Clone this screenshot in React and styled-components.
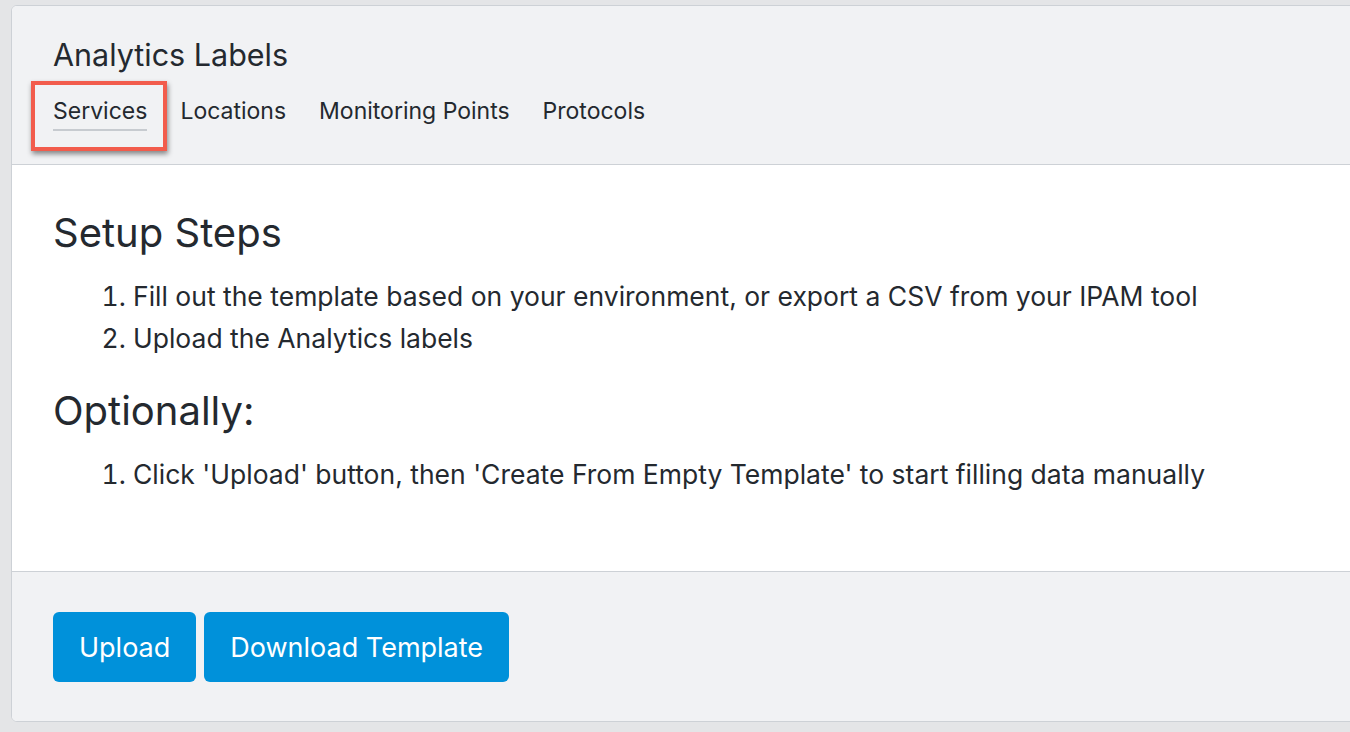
import React from "react";
import styled, { createGlobalStyle } from "styled-components";

const Global = createGlobalStyle`
  body {
    margin: 0;
    background: #e4e5e7;
    font-family: Inter, "Noto Sans", sans-serif;
    color: #24292f;
  }
`;

const Page = styled.div`
  padding: 5px 0 10px 11px;
  overflow: hidden;
`;

const Card = styled.div`
  width: 1360px;
  border: 1.5px solid #cdd1d6;
  border-radius: 6px;
  overflow: hidden;
  background: #fff;
`;

const Header = styled.div`
  background: #f1f2f4;
  border-bottom: 1.5px solid #cdd1d6;
  padding: 31px 41px 0;
  height: 159px;
  box-sizing: border-box;
`;

const Title = styled.div`
  font-size: 30.5px;
  line-height: 36px;
`;

const Tabs = styled.div`
  display: flex;
  gap: 33px;
  margin-top: 24px;
`;

const Tab = styled.div`
  position: relative;
  font-size: 23px;
  line-height: 28px;
  padding-bottom: 4px;
  border-bottom: 2px solid ${(p) => (p.$active ? "#c7cbd0" : "transparent")};
`;

const Highlight = styled.div`
  position: absolute;
  left: -22px;
  top: -16px;
  width: 128px;
  height: 62px;
  border: 4px solid #f25c4c;
  box-shadow: 1px 3px 5px rgba(0, 0, 0, 0.45);
`;

const Body = styled.div`
  padding: 44px 41px 60px;
  height: 406px;
  box-sizing: border-box;
`;

const Heading = styled.h2`
  font-size: 40px;
  font-weight: 400;
  margin: 0;
  line-height: 48px;
`;

const List = styled.ol`
  margin: 18px 0 28px;
  padding-left: 80px;
  font-size: 26.5px;
  line-height: 42px;
`;

const Footer = styled.div`
  background: #f1f2f4;
  border-top: 1.5px solid #cdd1d6;
  padding: 40px 41px 39px;
  display: flex;
  gap: 8px;
`;

const Button = styled.button`
  background: #0091da;
  color: #fff;
  border: none;
  border-radius: 6px;
  height: 70px;
  padding: 0 26px;
  font-family: inherit;
  font-size: 27px;
`;

export default function App() {
  return (
    <>
      <Global />
      <Page>
        <Card>
          <Header>
            <Title>Analytics Labels</Title>
            <Tabs>
              <Tab $active>
                Services
                <Highlight />
              </Tab>
              <Tab>Locations</Tab>
              <Tab>Monitoring Points</Tab>
              <Tab>Protocols</Tab>
            </Tabs>
          </Header>
          <Body>
            <Heading>Setup Steps</Heading>
            <List>
              <li>Fill out the template based on your environment, or export a CSV from your IPAM tool</li>
              <li>Upload the Analytics labels</li>
            </List>
            <Heading>Optionally:</Heading>
            <List>
              <li>Click 'Upload' button, then 'Create From Empty Template' to start filling data manually</li>
            </List>
          </Body>
          <Footer>
            <Button>Upload</Button>
            <Button>Download Template</Button>
          </Footer>
        </Card>
      </Page>
    </>
  );
}
